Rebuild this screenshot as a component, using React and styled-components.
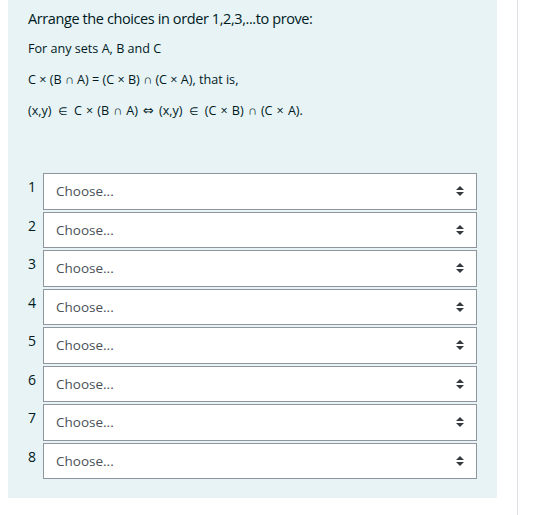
import React from "react";
import styled, { createGlobalStyle } from "styled-components";

const GlobalStyle = createGlobalStyle`
  html, body {
    margin: 0;
    padding: 0;
    background: #fff;
  }
  body {
    font-family: "Open Sans", "Noto Sans", sans-serif;
    color: #001a1e;
  }
`;

const Page = styled.div`
  display: flex;
  height: 515px;
  overflow: hidden;
`;

const Column = styled.div`
  width: 517px;
  padding-left: 8px;
  box-sizing: border-box;
`;

const Divider = styled.div`
  width: 1px;
  height: 100%;
  background: #dee2e6;
`;

const Formulation = styled.div`
  width: 489px;
  box-sizing: border-box;
  background: #e7f3f5;
  padding: 8px 20px 19px;
`;

const Title = styled.p`
  margin: 0;
  font-size: 14.5px;
  line-height: 22px;
  letter-spacing: -0.4px;
`;

const Para = styled.p`
  margin: ${(p) => (p.first ? "9px" : "11px")} 0 0;
  font-size: 12.6px;
  line-height: 20px;
  word-spacing: ${(p) => p.spread || "0"};
`;

const Sym = styled.span`
  font-family: "DejaVu Sans", sans-serif;
  font-size: ${(p) => p.size || "10.5px"};
  margin: 0 ${(p) => p.gap || "2.5px"};
`;

const Answers = styled.div`
  margin-top: 52px;
  display: flex;
  flex-direction: column;
  gap: 2px;
`;

const Row = styled.div`
  display: flex;
  align-items: flex-start;
`;

const Num = styled.div`
  width: 15px;
  flex: none;
  padding-top: 5px;
  font-size: 14px;
  line-height: 18px;
`;

const SelectBox = styled.div`
  position: relative;
  width: 462px;
  height: 36.5px;
  box-sizing: border-box;
  border: 1px solid #8f959e;
  background: #fff;
  display: flex;
  align-items: center;
  padding: 0 28px 0 12px;
  font-size: 13.5px;
  color: #495057;
`;

const Caret = styled.svg`
  position: absolute;
  right: 12px;
  top: 50%;
  margin-top: -5px;
`;

function Arrows() {
  return (
    <Caret width="8" height="10" viewBox="0 0 8 10">
      <path d="M4 0 L8 4 L0 4 Z M4 10 L0 6 L8 6 Z" fill="#343a40" />
    </Caret>
  );
}

export default function App() {
  const rows = [1, 2, 3, 4, 5, 6, 7, 8];
  return (
    <>
      <GlobalStyle />
      <Page>
        <Column>
          <Formulation>
            <Title>Arrange the choices in order 1,2,3,...to prove:</Title>
            <Para first>For any sets A, B and C</Para>
            <Para>C × (B ∩ A) = (C × B) ∩ (C × A), that is,</Para>
            <Para spread="0.8px">
              (x,y) <Sym>∈</Sym> C × (B ∩ A) <Sym size="13px" gap="1px">⇔</Sym> (x,y) <Sym>∈</Sym> (C × B) ∩ (C × A).
            </Para>
            <Answers>
              {rows.map((n) => (
                <Row key={n}>
                  <Num>{n}</Num>
                  <SelectBox>
                    Choose...
                    <Arrows />
                  </SelectBox>
                </Row>
              ))}
            </Answers>
          </Formulation>
        </Column>
        <Divider />
      </Page>
    </>
  );
}
